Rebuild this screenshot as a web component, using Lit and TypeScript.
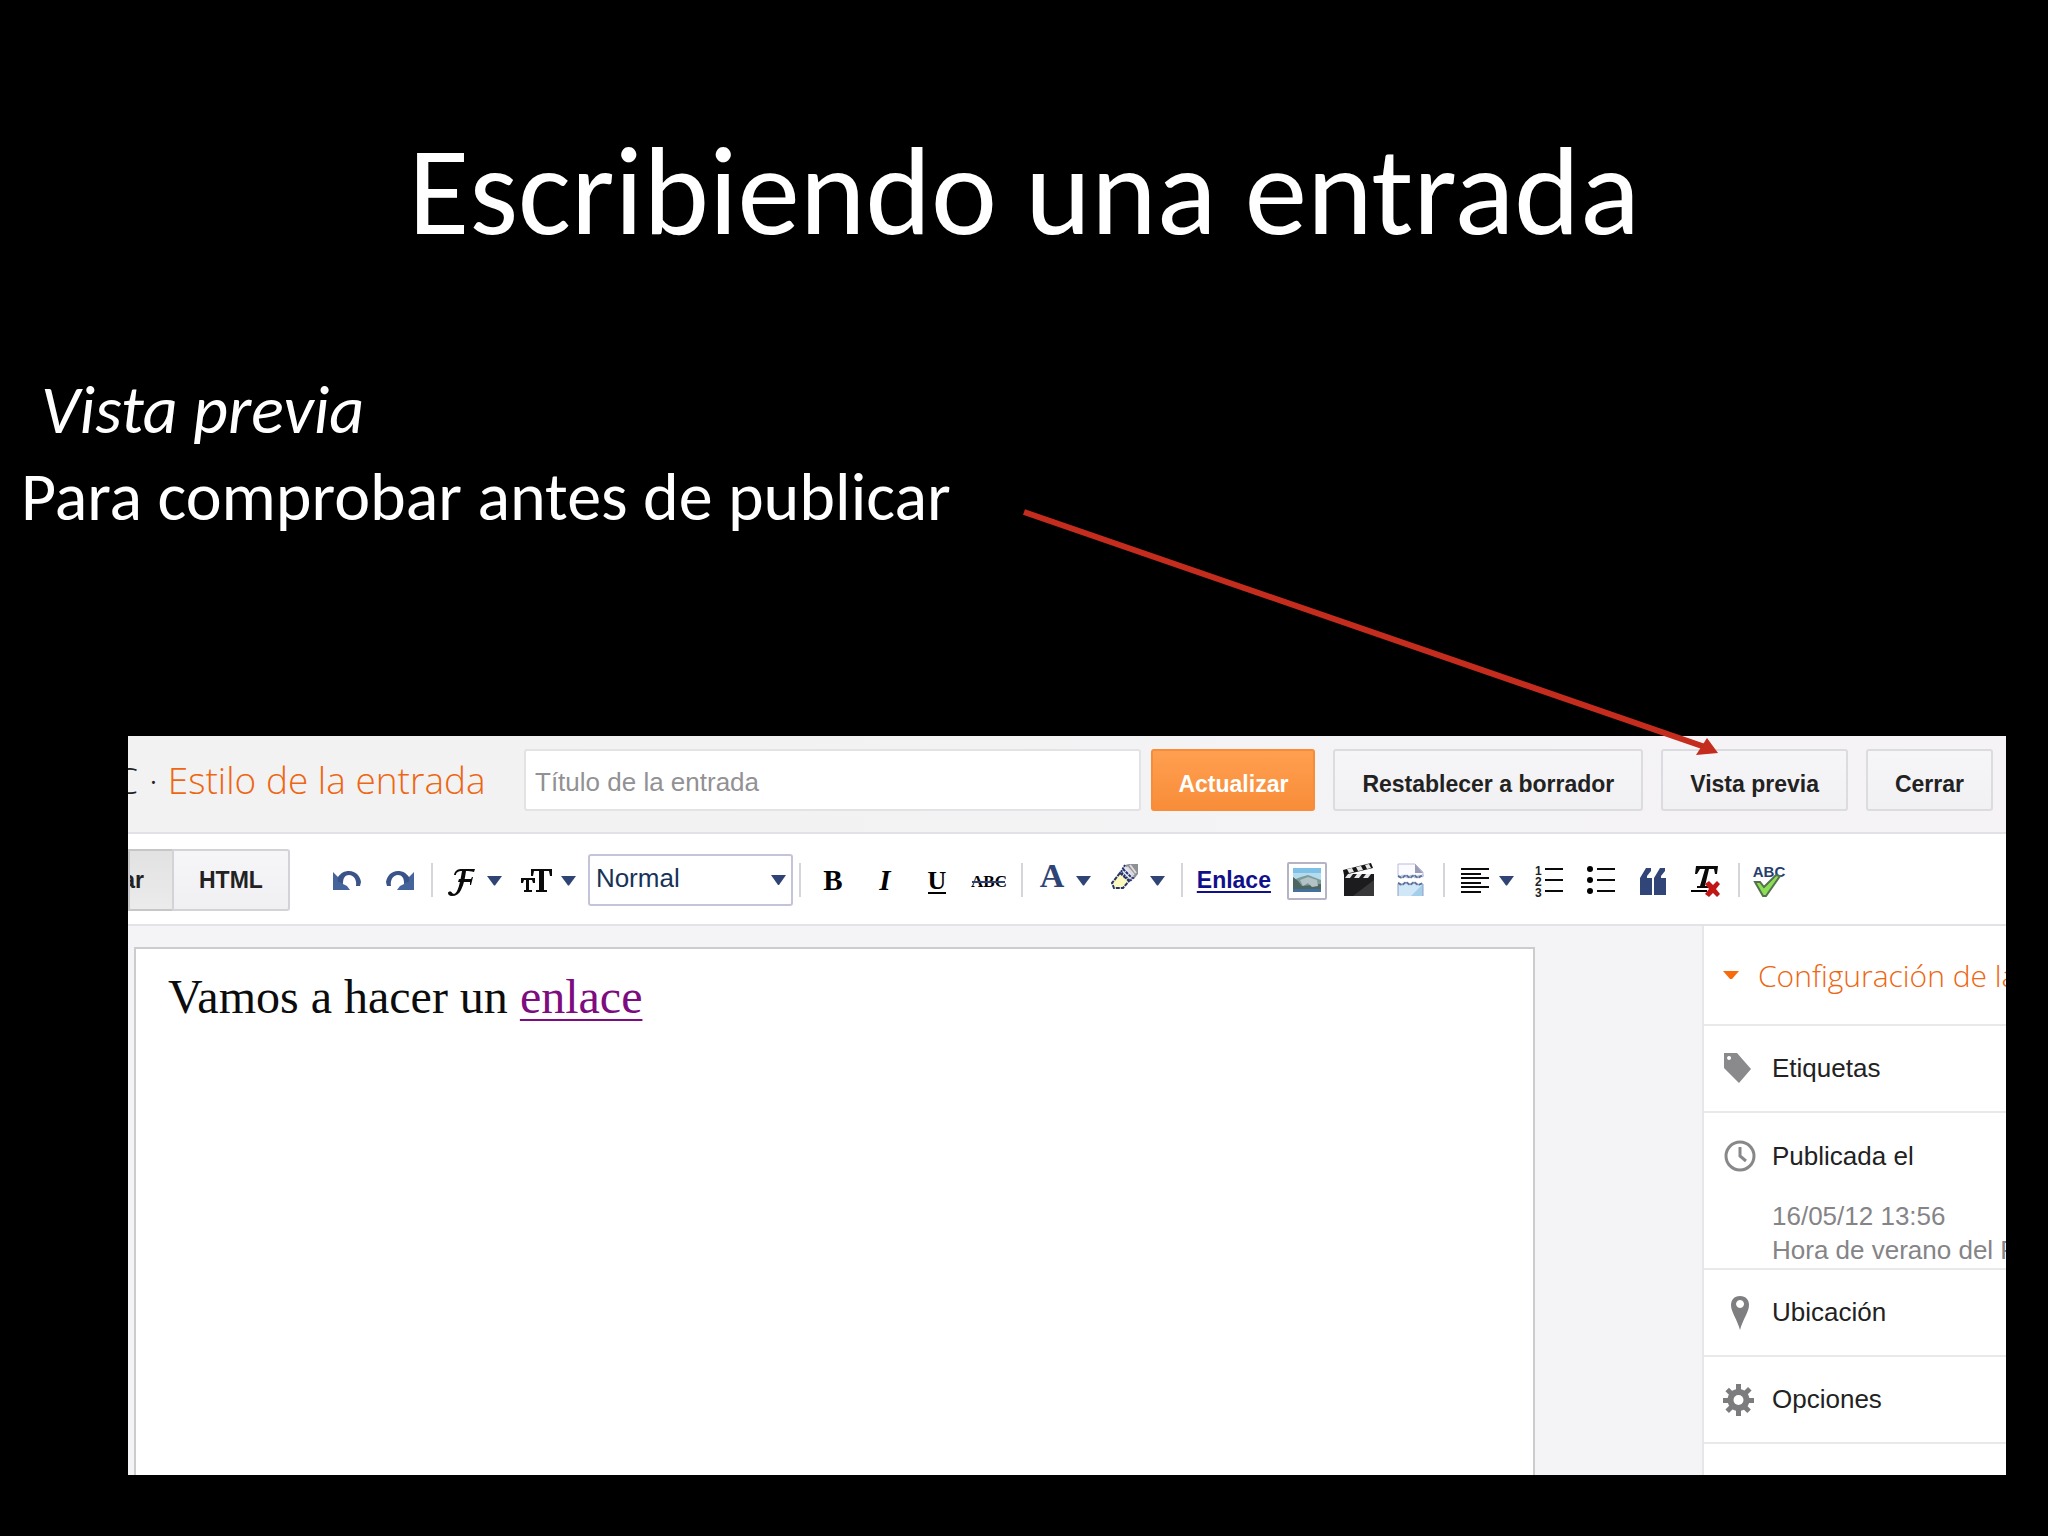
import { LitElement, html, css, svg, TemplateResult } from "lit";
import { customElement } from "lit/decorators.js";

const caret = (x: number) => svg`<path d="M${x} 16h15l-7 9.500h-1z" fill="#2f4475"></path>`;

const icon = (width: number, content: TemplateResult) =>
  html`<svg class="icon" width=${width} height="40" viewBox="0 0 ${width} 40" aria-hidden="true">${content}</svg>`;

const undoShape = svg`
  <path d="M12 12l6 6 4-2v8l4 2 3 4H12z" fill="#45649c"></path>
  <path d="M17 17c3-4 6-6 11-6 7 0 11 5 12 11l-1 4h-4c1-6-2-11-7-11-4 0-6 3-6 8l-5-1z" fill="#3a5489"></path>`;

const icons = {
  undo: icon(52, svg`${undoShape}`),
  redo: icon(52, svg`<g transform="translate(53 0) scale(-1 1)">${undoShape}</g>`),
  font: icon(73, svg`
    <path d="M15 15c1-5 4-6 8-6h13l-1 3c-3-1-5-1-8-1-1 7-2 13-5 19-2 4-5 6-9 6-3 0-4-2-4-3 0-2 4-2 4 0l2 1c4-1 6-11 8-23-3 0-6 1-6 4z" fill="#0a0a0a"></path>
    <path d="M20 19h12l1-2h1l-2 8h-1v-3H19z" fill="#0a0a0a"></path>
    ${caret(48)}`),
  size: icon(73, svg`
    <path d="M19 9h21v7h-2l-1-5h-5v19h3v2H24v-2h3V11h-5l-1 5h-2z" fill="#0a0a0a"></path>
    <path d="M9 18h14v5h-2l-1-3h-3v10h3v2h-8v-2h2V20h-2l-1 3H9z" fill="#0a0a0a"></path>
    ${caret(49)}`),
  bold: icon(52, svg`<text class="glyph" x="26" y="30" font-size="29" font-weight="700">B</text>`),
  italic: icon(52, svg`<text class="glyph" x="26" y="30" font-size="29" font-weight="700" font-style="italic">I</text>`),
  underline: icon(52, svg`<text class="glyph" x="26" y="29" font-size="26" font-weight="700">U</text>
    <path d="M17 32h18v2H17z"></path>`),
  strike: icon(52, svg`<text class="glyph" x="26" y="27" font-size="17" font-weight="700">ABC</text>
    <path d="M9 21h33v2H9z" fill="#2f4475"></path>`),
  color: icon(73, svg`<text class="glyph" x="23" y="27" font-size="34" font-weight="700" fill="#2f4475">A</text>${caret(47)}`),
  highlight: icon(73, svg`
    <path d="M23 5l4-1h9v10l-4 5-10-9z" fill="#8f8f96"></path>
    <path d="M28 5l6 8M25 7l7 8" stroke="#dcdcdc" stroke-width="2"></path>
    <path d="M23 5l-4 7 9 9 4-4" fill="#e4e4ee" stroke="#26346c" stroke-width="2" stroke-dasharray="2 1"></path>
    <path d="M21 9l9 9" stroke="#26346c" stroke-width="2" stroke-dasharray="3 1"></path>
    <path d="M18 13l-8 10 2 5h9l6-7z" fill="#fdf8bd" stroke="#26346c" stroke-width="2" stroke-dasharray="4 1"></path>
    ${caret(48)}`),
  image: icon(52, svg`
    <rect x="7" y="3" width="38" height="36" rx="1" fill="#fff" stroke="#b4b4c6" stroke-width="2"></rect>
    <path d="M12 8h28v12H12z" fill="#7fc0e6"></path><path d="M12 13h28v7H12z" fill="#b4dbee"></path>
    <path d="M12 20l8-3 7-2 13 5v11H12z" fill="#7d9b98"></path>
    <path d="M12 17l5 4 4 5 19-2v7H12z" fill="#4d6660"></path>
    <path d="M19 20l8-3 9 3 1 6-6 1-4-4-5 3z" fill="#b3c2c6"></path>
    <path d="M12 29h28v3H12z" fill="#4470a0"></path>`),
  video: icon(52, svg`
    <path d="M11 14h30v22H11z" fill="#1c1c1e"></path><path d="M41 20v16H20z" fill="#38383b"></path>
    <path d="M10 10l28-7 2 5-29 7z" fill="#151515"></path>
    <path d="M14 9l5-1 2 4-5 1zM23 7l5-1 2 4-5 1zM32 5l4-1 2 4-4 1z" fill="#e8e8e8"></path>
    <path d="M15 14h5l-3 4h-5zM24 14h5l-3 4h-5zM33 14h5l-3 4h-5z" fill="#e8e8e8"></path>`),
  pageBreak: icon(52, svg`
    <path d="M13 15V4h17l8 8v5l-4-2-4 3-4-3-4 3-4-3-4 2z" fill="#fbfbff" stroke="#b9bcda" stroke-width="1"></path>
    <path d="M30 4l8 9h-8z" fill="#9a9bb5"></path>
    <path d="M13 16l4 2 4-3 4 3 4-3 4 3 5-3" fill="none" stroke="#5d719d" stroke-width="2" stroke-dasharray="4 1"></path>
    <path d="M13 23l4 2 4-3 4 3 4-3 4 3 5-2v13H13z" fill="#cfe7f6"></path>
    <path d="M26 36l12-12v12z" fill="#a4cfea"></path>
    <path d="M13 23l4 2 4-3 4 3 4-3 4 3 5-2" fill="none" stroke="#5d719d" stroke-width="2" stroke-dasharray="4 1"></path>
    <path d="M13 36V24M38 24v12" fill="none" stroke="#8fa0c4" stroke-width="1"></path>`),
  align: icon(73, svg`<path d="M10 8h28v2H10zM10 13h20v2H10zM10 17h28v2H10zM10 22h20v2H10zM10 26h28v2H10zM10 31h20v2H10z" fill="#0a0a0a"></path>${caret(48)}`),
  ordered: icon(52, svg`<text class="digit" x="11" y="15">1</text><text class="digit" x="11" y="26">2</text><text class="digit" x="11" y="37">3</text>
    <path d="M21 8h18v2H21zM21 19h18v2H21zM21 30h18v2H21z" fill="#0a0a0a"></path>`),
  bullets: icon(52, svg`<circle cx="14" cy="9" r="3"></circle><circle cx="14" cy="20" r="3"></circle><circle cx="14" cy="31" r="3"></circle>
    <path d="M21 8h18v2H21zM21 19h18v2H21zM21 30h18v2H21z" fill="#0a0a0a"></path>`),
  quote: icon(52, svg`<path d="M12 35V18l6-10h5v3l-4 5v2h5v17zM26 35V18l6-10h5v3l-4 5v2h5v17z" fill="#324578"></path>`),
  clear: icon(52, svg`<path d="M16 6h22l-1 8h-2l-1-5h-5l-4 17h4v2H17v-2h3l5-17h-5l-3 5h-2z" fill="#0a0a0a"></path>
    <path d="M11 30h16v2H11z"></path>
    <path d="M25 24l4-3 4 4 4-4 3 3-4 5 4 5-3 3-4-4-4 4-4-3 4-5z" fill="#c01616"></path>`),
  spelling: icon(52, svg`<text class="sans" x="23" y="17" font-size="15">ABC</text>
    <path d="M9 22h5l4 5 12-12 4 1-14 20h-3z" fill="#8ae052" stroke="#56704f" stroke-width="2"></path>`),
};

type Tool = { label: string; icon: TemplateResult };
const tool = (label: string, drawing: TemplateResult): Tool => ({ label, icon: drawing });

const history = [tool("Deshacer", icons.undo), tool("Rehacer", icons.redo)];
const fonts = [tool("Fuente", icons.font), tool("Tamaño", icons.size)];
const styles = [tool("Negrita", icons.bold), tool("Cursiva", icons.italic), tool("Subrayado", icons.underline), tool("Tachado", icons.strike)];
const colors = [tool("Color de texto", icons.color), tool("Color de fondo", icons.highlight)];
const media = [tool("Imagen", icons.image), tool("Vídeo", icons.video), tool("Salto", icons.pageBreak)];
const blocks = [tool("Alineación", icons.align), tool("Numeración", icons.ordered), tool("Viñetas", icons.bullets), tool("Cita", icons.quote), tool("Quitar formato", icons.clear)];
const spelling = [tool("Ortografía", icons.spelling)];

const sideIcons = {
  tag: svg`<path fill-rule="evenodd" d="M1 1h13l14 16-12 14L1 16zM6 4a2 2 0 1 0 .1 0z" fill="#8a898c"></path>`,
  clock: svg`<circle cx="17" cy="17" r="14" fill="none" stroke="#88878a" stroke-width="3"></circle>
    <path d="M17 8v9l6 5" fill="none" stroke="#88878a" stroke-width="3"></path>`,
  pin: svg`<path fill-rule="evenodd" d="M17 0c6 0 9 4 9 9 0 7-6 14-9 25C14 23 8 16 8 9c0-5 3-9 9-9zM17 4a4 4 0 1 0 .1 0z" fill="#7f7e80"></path>`,
  gear: svg`<g fill="#7c7b7e"><path d="M13 1h5v32h-5zM0 15h31v5H0z"></path>
    <path d="M13 1h5v32h-5zM0 15h31v5H0z" transform="rotate(45 15.500 17)"></path><circle cx="15.500" cy="17" r="11"></circle></g>
    <circle cx="15.500" cy="17" r="5" fill="#fff"></circle>`,
};
const sideIcon = (shape: TemplateResult) =>
  html`<svg class="side-icon" width="34" height="34" viewBox="0 0 34 34" aria-hidden="true">${shape}</svg>`;

@customElement("post-toolbar")
export class PostToolbar extends LitElement {
  static styles = css`
    :host { display: flex; align-items: center; height: 88px; padding-top: 2px; overflow: hidden; background: #fff; border-bottom: 2px solid #e3e2e6; }
    button { flex: none; border: 0; padding: 0; margin: 0; background: none; font-family: "Liberation Sans", Arial, sans-serif; font-size: 23px; font-weight: 700; }
    .tabs { display: flex; flex: none; margin-right: 31px; }
    .tab { height: 62px; padding: 0 25px; border: 2px solid #d3d2d6; border-radius: 0 3px 3px 0; color: #222; background: linear-gradient(#f6f5f8, #f0eff2); }
    .tab.pressed { width: 44px; padding: 0 28px 0 0; border-right: 0; border-radius: 0; display: flex; align-items: center; justify-content: flex-end; overflow: hidden; background: linear-gradient(#e2e2e2, #ebebeb); border-color: #c6c6c8; }
    .tool { display: block; height: 40px; }
    .icon { display: block; }
    .sep { flex: none; width: 14px; height: 34px; display: flex; justify-content: center; }
    .sep::before { content: ""; width: 2px; background: #d6d5da; }
    .format { flex: none; display: grid; align-items: center; margin-left: 3px; width: 205px; }
    select { grid-area: 1 / 1; appearance: none; width: 100%; height: 52px; box-sizing: border-box; padding: 0 6px 4px; border: 2px solid #c3c3da; border-radius: 3px; background: #fff; color: #173358; font-family: "Liberation Sans", Arial, sans-serif; font-size: 26px; }
    .format-caret { grid-area: 1 / 1; justify-self: end; margin-right: 7px; pointer-events: none; }
    .link { width: 90px; margin-right: 2px; height: 40px; color: #11108c; font-size: 23px; text-decoration: underline; text-decoration-thickness: 2px; text-underline-offset: 3px; }
    .glyph { font-family: "Liberation Serif", serif; text-anchor: middle; }
    .digit { font: 700 12px "Liberation Sans", sans-serif; fill: #222; }
    .sans { font-family: "Liberation Sans", sans-serif; font-weight: 700; text-anchor: middle; fill: #26406e; }
  `;

  private tools(list: Tool[]) {
    return list.map((t) => html`<button class="tool" type="button" aria-label=${t.label}>${t.icon}</button>`);
  }

  render() {
    const sep = html`<span class="sep"></span>`;
    return html`
      <div class="tabs">
        <button class="tab pressed" type="button">ar</button>
        <button class="tab" type="button">HTML</button>
      </div>
      ${this.tools(history)}${sep}${this.tools(fonts)}
      <div class="format">
        <select aria-label="Formato"><option>Normal</option></select>
        <svg class="format-caret" width="15" height="10" viewBox="0 0 15 10" aria-hidden="true"><path d="M0 0h15L8 10H7z" fill="#2f4475"></path></svg>
      </div>
      ${sep}${this.tools(styles)}${sep}${this.tools(colors)}${sep}
      <button class="link" type="button">Enlace</button>
      ${this.tools(media)}${sep}${this.tools(blocks)}${sep}${this.tools(spelling)}
    `;
  }
}

@customElement("post-settings")
export class PostSettings extends LitElement {
  static styles = css`
    :host { display: block; overflow: hidden; background: #fff; border-left: 2px solid #e6e5e9; font-family: "Liberation Sans", Arial, sans-serif; white-space: nowrap; }
    h2 { margin: 0; font-weight: 300; }
    button { display: flex; align-items: center; width: 100%; height: 85px; border: 0; padding: 0 0 0 19px; background: none; text-align: left; font-family: inherit; font-size: 26px; color: #222; white-space: nowrap; }
    .section { border-bottom: 2px solid #e9e8eb; }
    .section button { gap: 15px; }
    .section .title { height: 98px; gap: 19px; font-family: "Open Sans", sans-serif; font-weight: 300; font-size: 30px; color: #ee6611; }
    .title svg { flex: none; }
    .side-icon { flex: none; }
    .detail { margin: 0; padding: 0 0 1px 68px; font-size: 26px; line-height: 34px; color: #858487; }
    .dated button { height: 86px; }
  `;

  render() {
    return html`
      <h2 class="section">
        <button class="title" type="button">
          <svg width="16" height="8" viewBox="0 0 16 8" aria-hidden="true"><path d="M0 0h16L9 8H7z" fill="#f76b0c"></path></svg>
          <span>Configuración de la entrada</span>
        </button>
      </h2>
      <div class="section"><button type="button">${sideIcon(sideIcons.tag)}<span>Etiquetas</span></button></div>
      <div class="section dated">
        <button type="button">${sideIcon(sideIcons.clock)}<span>Publicada el</span></button>
        <p class="detail">16/05/12 13:56<br />Hora de verano del Pacífico</p>
      </div>
      <div class="section"><button type="button">${sideIcon(sideIcons.pin)}<span>Ubicación</span></button></div>
      <div class="section"><button type="button">${sideIcon(sideIcons.gear)}<span>Opciones</span></button></div>
    `;
  }
}

@customElement("app-root")
export class AppRoot extends LitElement {
  static styles = css`
    :host { display: flex; flex-direction: column; position: relative; box-sizing: border-box; min-height: 100vh; padding: 120px 42px 61px 128px; background: #000; color: #fff; overflow: hidden; }
    .headline { margin: 0 0 0 -86px; text-align: center; font: 400 125px/144px Carlito, Lato, sans-serif; }
    .notes { margin: 102px 0 0 -107px; flex: none; font: 400 68px/87px Carlito, Lato, sans-serif; height: 370px; }
    .notes p { margin: 0; }
    .notes .lead { font-style: italic; padding-left: 20px; }
    .window { flex: 1; display: flex; flex-direction: column; overflow: hidden; background: #f4f3f5; color: #222; font-family: "Liberation Sans", Arial, sans-serif; }
    .topbar { display: flex; align-items: center; height: 98px; box-sizing: border-box; padding: 0 13px 8px 0; border-bottom: 2px solid #e2e1e5; gap: 18px; background: linear-gradient(90deg, #f2f2f2, #f5f3f6); }
    .crumbs { flex: none; display: flex; width: 378px; margin: 0; overflow: hidden; white-space: nowrap; font: 300 37px/56px "Open Sans", sans-serif; }
    .crumbs .blog { margin-left: -13px; width: 34px; }
    .crumbs .here { margin-left: 10px; color: #ee6611; }
    input { flex: 1; min-width: 0; height: 62px; box-sizing: border-box; padding: 4px 9px 0; margin-right: -8px; border: 2px solid #e3e2e5; border-radius: 3px; font: 26px "Liberation Sans", Arial, sans-serif; }
    input::placeholder { color: #929193; opacity: 1; }
    .action { flex: none; height: 62px; padding: 8px 27px 0; border: 2px solid #dcdbdf; border-radius: 3px; background: linear-gradient(#f6f5f7, #f1f0f2); color: #222; font: 700 23px "Liberation Sans", Arial, sans-serif; }
    .action.primary { padding: 8px 25px 0; border-color: #f78d38; background: linear-gradient(#ff9f50, #f88d39); color: #fff; }
    .workspace { flex: 1; display: flex; }
    .editor { flex: 1; margin: 21px 167px 0 6px; padding: 20px 32px; border: 2px solid #cccbce; border-bottom: 0; background: #fff; color: #0c0c0c; font: 48px/56px "Liberation Serif", "Times New Roman", serif; }
    .editor p { margin: 0; }
    .editor a { color: #7d0c80; text-decoration-thickness: 2px; text-underline-offset: 6px; }
    post-settings { flex: none; width: 302px; }
    .pointer { position: absolute; top: 500px; right: 328px; pointer-events: none; }
  `;

  render() {
    return html`
      <h1 class="headline">Escribiendo una entrada</h1>
      <div class="notes">
        <p class="lead">Vista previa</p>
        <p>Para comprobar antes de publicar</p>
      </div>
      <main class="window">
        <header class="topbar">
          <p class="crumbs"><span class="blog">C</span><span>·</span><span class="here">Estilo de la entrada</span></p>
          <input type="text" aria-label="Título de la entrada" placeholder="Título de la entrada" />
          <button class="action primary" type="button">Actualizar</button>
          <button class="action" type="button">Restablecer a borrador</button>
          <button class="action" type="button">Vista previa</button>
          <button class="action" type="button">Cerrar</button>
        </header>
        <post-toolbar></post-toolbar>
        <div class="workspace">
          <article class="editor"><p>Vamos a hacer un <a href="#enlace">enlace</a></p></article>
          <post-settings></post-settings>
        </div>
      </main>
      <svg class="pointer" width="700" height="260" viewBox="0 0 700 260" aria-hidden="true">
        <path d="M4 12L685 247" stroke="#c42c1e" stroke-width="6"></path>
        <path d="M698 253L687 238L676 255z" fill="#c42c1e"></path>
      </svg>
    `;
  }
}
